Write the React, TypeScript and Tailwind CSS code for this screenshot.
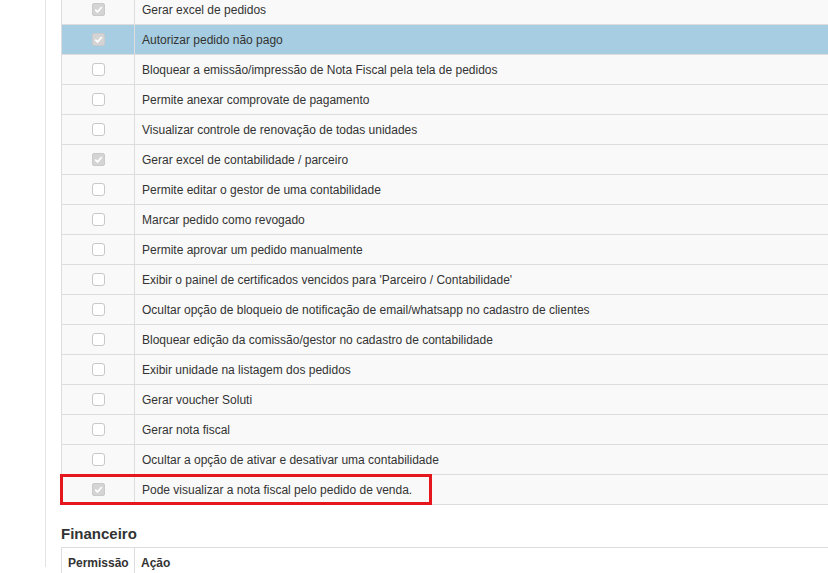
import React from "react";

const rows: { label: string; checked: boolean; active?: boolean }[] = [
  { label: "Gerar excel de pedidos", checked: true },
  { label: "Autorizar pedido não pago", checked: true, active: true },
  { label: "Bloquear a emissão/impressão de Nota Fiscal pela tela de pedidos", checked: false },
  { label: "Permite anexar comprovate de pagamento", checked: false },
  { label: "Visualizar controle de renovação de todas unidades", checked: false },
  { label: "Gerar excel de contabilidade / parceiro", checked: true },
  { label: "Permite editar o gestor de uma contabilidade", checked: false },
  { label: "Marcar pedido como revogado", checked: false },
  { label: "Permite aprovar um pedido manualmente", checked: false },
  { label: "Exibir o painel de certificados vencidos para 'Parceiro / Contabilidade'", checked: false },
  { label: "Ocultar opção de bloqueio de notificação de email/whatsapp no cadastro de clientes", checked: false },
  { label: "Bloquear edição da comissão/gestor no cadastro de contabilidade", checked: false },
  { label: "Exibir unidade na listagem dos pedidos", checked: false },
  { label: "Gerar voucher Soluti", checked: false },
  { label: "Gerar nota fiscal", checked: false },
  { label: "Ocultar a opção de ativar e desativar uma contabilidade", checked: false },
  { label: "Pode visualizar a nota fiscal pelo pedido de venda.", checked: true },
];

function Box({ checked }: { checked: boolean }) {
  if (checked) {
    return (
      <div className="w-[13px] h-[13px] rounded-[2px] bg-[#d4d4d4] border border-[#cacaca] flex items-center justify-center">
        <svg width="9" height="9" viewBox="0 0 9 9">
          <path d="M1.2 4.6 L3.5 6.9 L7.8 2" fill="none" stroke="#ffffff" strokeWidth="1.7" />
        </svg>
      </div>
    );
  }
  return <div className="w-[13px] h-[13px] rounded-[3px] bg-white border border-[#c8c8c8]" />;
}

export default function App() {
  return (
    <div
      className="relative w-[828px] h-[573px] overflow-hidden bg-white text-[#333] text-[12px]"
      style={{ fontFamily: '"Liberation Sans", Arial, sans-serif' }}
    >
      <div className="ml-[45px] h-full border-l border-[#e3e3e3] pl-[15px]">
        <div className="relative mt-[-6px] w-[800px] border-l border-[#dddddd]">
          {rows.map((r, i) => (
            <div
              key={i}
              className={`flex h-[30px] border-t border-[#dddddd] ${r.active ? "bg-[#a6cde1]" : "bg-[#f9f9f9]"}`}
            >
              <div className="w-[73px] shrink-0 border-r border-[#dddddd] flex items-center justify-center">
                <Box checked={r.checked} />
              </div>
              <div className="flex items-center pl-[7px] leading-[16px]">{r.label}</div>
            </div>
          ))}
          <div className="border-t border-[#dddddd]" />
          <div className="absolute left-[-2px] top-[480px] w-[372px] h-[31px] border-[3px] border-[#e5171d]" />
        </div>
        <div className="pt-[21px] pb-[5px] text-[15px] leading-[16px] font-bold">Financeiro</div>
        <div className="w-[800px] border-l border-t border-[#dddddd] bg-white">
          <div className="flex h-[30px] font-bold">
            <div className="w-[73px] shrink-0 border-r border-[#dddddd] flex items-center pl-[6px]">Permissão</div>
            <div className="flex items-center pl-[6px]">Ação</div>
          </div>
        </div>
      </div>
    </div>
  );
}
